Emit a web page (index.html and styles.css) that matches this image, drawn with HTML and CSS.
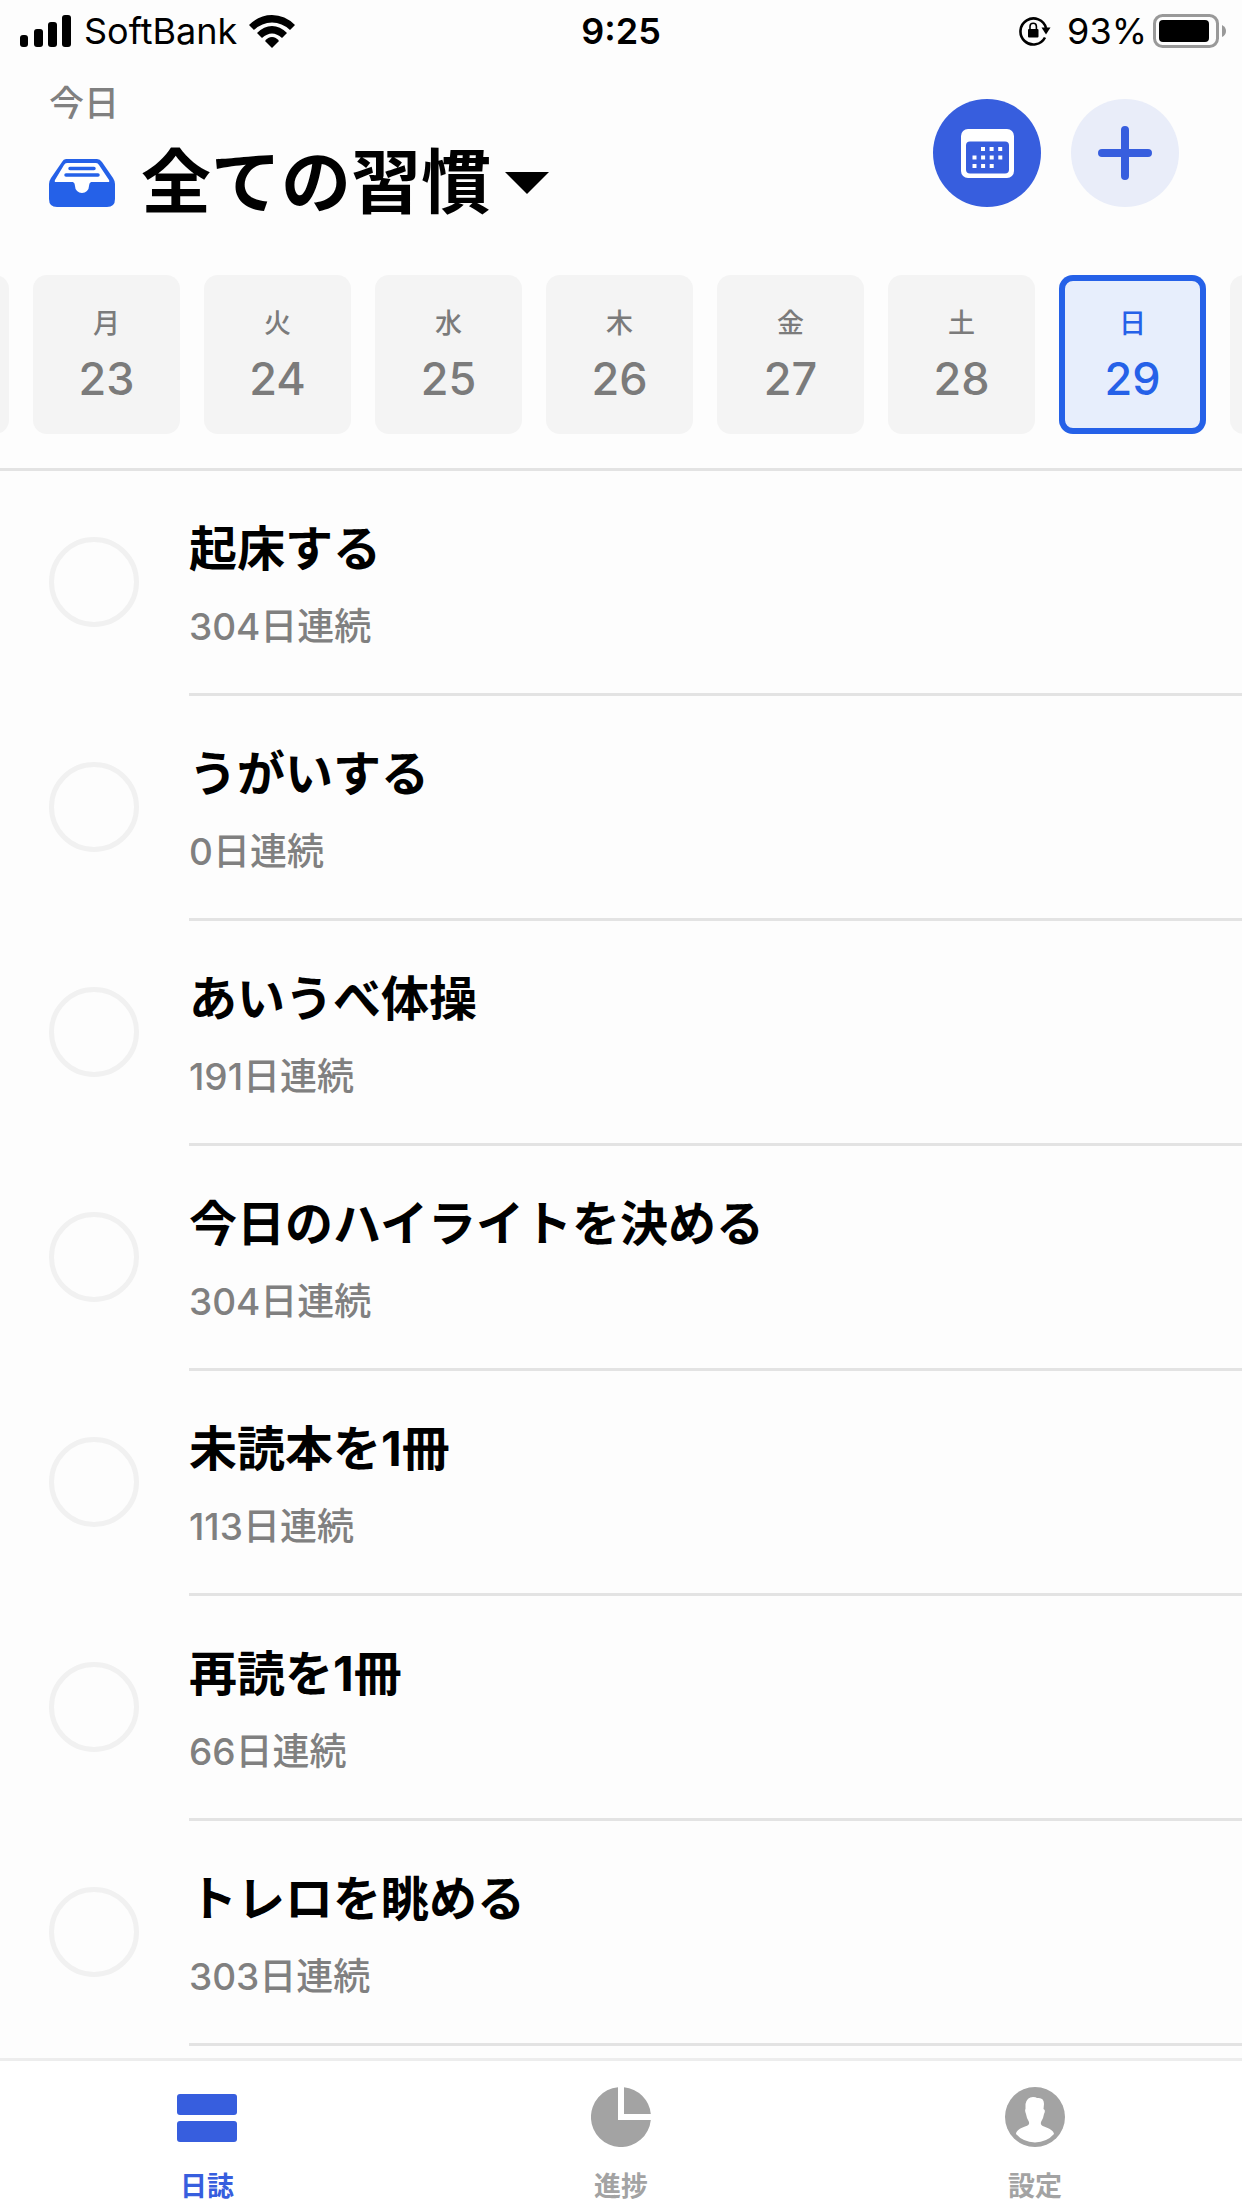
FILE: index.html
```html
<!DOCTYPE html>
<html lang="ja">
<head>
    <meta charset="UTF-8">
    <meta name="viewport" content="width=device-width, initial-scale=1.0">
    <title>全ての習慣</title>
    <link rel="stylesheet" href="styles.css">
</head>
<body>
    <div class="status-bar">
        <div class="status-left">
            <svg class="signal" width="52" height="32" viewBox="0 0 52 32">
                <rect x="0" y="20" width="8" height="12" rx="3"/>
                <rect x="14" y="14" width="9" height="18" rx="3"/>
                <rect x="28" y="7" width="9" height="25" rx="3"/>
                <rect x="42" y="0" width="9" height="32" rx="3"/>
            </svg>
            <span>SoftBank</span>
            <svg class="wifi" width="46" height="33" viewBox="0 0 46 33">
                <path d="M0 10Q10 0 23 0T46 10L41 15Q33 7.500 23 7.500T5 15Z"/>
                <path d="M8 18Q15 11 23 11T38 18L33 23Q28 18.500 23 18.500T13 23Z"/>
                <path d="M16 26Q19 22 23 22T30 26L23 33Z"/>
            </svg>
        </div>
        <span class="clock">9:25</span>
        <div class="status-right">
            <svg class="lock" width="32" height="30" viewBox="0 0 32 30">
                <path d="M26 21.500A13 13 0 1 1 27 12" fill="none" stroke="#000" stroke-width="2.600"/>
                <path d="M22.500 11.500H31.500L27 18.500Z"/>
                <rect x="9" y="13" width="10.500" height="8.500" rx="1"/>
                <path d="M11 14V10.500a3.200 3.200 0 0 1 6.400 0V14" fill="none" stroke="#000" stroke-width="1.600"/>
            </svg>
            <span>93%</span>
            <svg class="battery" width="74" height="34" viewBox="0 0 74 34">
                <rect x="1.500" y="1.500" width="63" height="31" rx="8" fill="none" stroke="#999" stroke-width="3"/>
                <rect x="6" y="6" width="50" height="22" rx="4"/>
                <path d="M69 11Q73 13 73 17T69 23Z" fill="#999"/>
            </svg>
        </div>
    </div>

    <header class="header">
        <div class="heading">
            <p class="today">今日</p>
            <div class="title">
                <svg class="inbox" width="66" height="50" viewBox="0 0 66 50">
                    <path d="M17 1H48Q51 1 53 4L64 20Q66 23 66 26V41Q66 49 58 49H8Q0 49 0 41V26Q0 23 2 20L13 4Q14.500 1 17 1Z" fill="#2561e8"/>
                    <path d="M18 5H47Q49 5 50 7L60 22Q61 24 59 24H42Q40 25 40 28A7 7 0 0 1 26 28Q26 25 24 24H7Q5 24 6 22L15 7Q16 5 18 5Z" fill="#fff"/>
                    <path d="M21 10.500H45M17 17H49" fill="none" stroke="#2561e8" stroke-width="3.500" stroke-linecap="round"/>
                </svg>
                <select class="habit-filter" aria-label="習慣">
                    <option>全ての習慣</option>
                </select>
                <svg class="caret" width="44" height="22" viewBox="0 0 44 22"><path d="M0 0H44L22 22Z"/></svg>
            </div>
        </div>
        <div class="actions">
            <button class="round-btn calendar-btn" type="button" aria-label="カレンダー">
                <svg width="53" height="49" viewBox="0 0 53 49">
                    <rect width="53" height="49" rx="7" fill="#fff"/>
                    <rect x="5" y="12.500" width="43" height="32" rx="4" fill="#375ede"/>
                    <path d="M20 20H42M11.500 28.500H42M11.500 37H33" fill="none" stroke="#fff" stroke-width="4" stroke-dasharray="4 4.600"/>
                </svg>
            </button>
            <button class="round-btn add-btn" type="button" aria-label="追加">
                <svg width="54" height="54" viewBox="0 0 54 54">
                    <path d="M27 4V50M4 27H50" stroke="#375ede" stroke-width="8" stroke-linecap="round"/>
                </svg>
            </button>
        </div>
    </header>

    <nav class="days" aria-label="日付">
        <button class="day" type="button" aria-label="前の日"></button>
        <button class="day" type="button"><span class="weekday">月</span><span class="date">23</span></button>
        <button class="day" type="button"><span class="weekday">火</span><span class="date">24</span></button>
        <button class="day" type="button"><span class="weekday">水</span><span class="date">25</span></button>
        <button class="day" type="button"><span class="weekday">木</span><span class="date">26</span></button>
        <button class="day" type="button"><span class="weekday">金</span><span class="date">27</span></button>
        <button class="day" type="button"><span class="weekday">土</span><span class="date">28</span></button>
        <button class="day selected" type="button"><span class="weekday">日</span><span class="date">29</span></button>
        <button class="day" type="button" aria-label="次の日"></button>
    </nav>

    <ul class="habits">
        <li class="habit">
            <input type="checkbox" id="habit-1">
            <label for="habit-1"><span class="name">起床する</span><span class="streak">304日連続</span></label>
        </li>
        <li class="habit">
            <input type="checkbox" id="habit-2">
            <label for="habit-2"><span class="name">うがいする</span><span class="streak">0日連続</span></label>
        </li>
        <li class="habit">
            <input type="checkbox" id="habit-3">
            <label for="habit-3"><span class="name">あいうべ体操</span><span class="streak">191日連続</span></label>
        </li>
        <li class="habit">
            <input type="checkbox" id="habit-4">
            <label for="habit-4"><span class="name">今日のハイライトを決める</span><span class="streak">304日連続</span></label>
        </li>
        <li class="habit">
            <input type="checkbox" id="habit-5">
            <label for="habit-5"><span class="name">未読本を1冊</span><span class="streak">113日連続</span></label>
        </li>
        <li class="habit">
            <input type="checkbox" id="habit-6">
            <label for="habit-6"><span class="name">再読を1冊</span><span class="streak">66日連続</span></label>
        </li>
        <li class="habit">
            <input type="checkbox" id="habit-7">
            <label for="habit-7"><span class="name">トレロを眺める</span><span class="streak">303日連続</span></label>
        </li>
    </ul>

    <nav class="tab-bar">
        <a class="tab active" href="#journal">
            <svg width="60" height="60" viewBox="0 0 60 60">
                <rect y="7" width="60" height="21" rx="3"/>
                <rect y="34" width="60" height="21" rx="3"/>
            </svg>
            <span>日誌</span>
        </a>
        <a class="tab" href="#progress">
            <svg width="60" height="60" viewBox="0 0 60 60">
                <path d="M27 0.200V33H59.800A30 30 0 1 1 27 0.200Z"/>
                <path d="M33 0.200A30 30 0 0 1 59.800 27H33Z"/>
            </svg>
            <span>進捗</span>
        </a>
        <a class="tab" href="#settings">
            <svg width="60" height="60" viewBox="0 0 60 60">
                <circle cx="30" cy="30" r="30"/>
                <path d="M28 10Q31 10 32 11Q39 10 39 17L38.500 22Q41 23 39 27Q38.500 31 36 35Q35 38 39 39.500C44 41 49 44 49 47Q42 55 30 55.500Q18 55 11 47C11 44 15 41 20 39.500Q25 38 24 35Q21.500 31 21 27Q19.500 23 20.500 22V17Q22 10 28 10Z" fill="#fff"/>
            </svg>
            <span>設定</span>
        </a>
    </nav>
</body>
</html>
```
FILE: styles.css
```css
* {
    box-sizing: border-box;
}
body {
    display: flex;
    flex-direction: column;
    height: 100vh;
    margin: 0;
    background-color: #fdfdfd;
    color: #000;
    font-family: Inter, "Noto Sans CJK JP", sans-serif;
}
button, select {
    padding: 0;
    border: none;
    background: none;
    color: inherit;
    font-family: inherit;
    cursor: pointer;
}
svg {
    display: block;
    flex-shrink: 0;
}

/* Status bar */
.status-bar {
    display: grid;
    grid-template-columns: 1fr auto 1fr;
    align-items: center;
    padding: 8px 15px 6px;
    font-size: 36px;
    line-height: 46px;
}
.status-left, .status-right {
    display: flex;
    align-items: center;
}
.status-left {
    gap: 12px;
    padding-left: 5px;
}
.status-right {
    justify-content: flex-end;
    gap: 6px;
}
.lock {
    margin-right: 10px;
}
.clock {
    font-weight: 600;
}

/* Header */
.header {
    display: flex;
    justify-content: space-between;
    padding: 20px 63px 0 49px;
}
.today {
    margin: 0;
    color: #808080;
    font-size: 35px;
    font-weight: 500;
    line-height: 46px;
}
.title {
    display: flex;
    align-items: center;
    margin-top: 2px;
}
.habit-filter {
    margin: 0 14px 0 26px;
    appearance: none;
    font-size: 70px;
    font-weight: 700;
    line-height: 110px;
}
.actions {
    display: flex;
    gap: 30px;
    padding-top: 19px;
}
.round-btn {
    display: flex;
    align-items: center;
    justify-content: center;
    width: 108px;
    height: 108px;
    border-radius: 50%;
}
.calendar-btn {
    background-color: #375ede;
}
.add-btn {
    background-color: #e9edf9;
}

/* Day strip */
.days {
    display: flex;
    gap: 24px;
    padding: 37px 0 34px;
    border-bottom: 3px solid #e3e3e3;
    overflow: hidden;
}
.day {
    display: flex;
    flex-direction: column;
    flex: 0 0 147px;
    align-items: center;
    gap: 3px;
    padding: 29px 0 23px;
    border-radius: 14px;
    background-color: #f4f4f4;
    color: #7b7b7b;
    font-weight: 500;
}
.day:first-child {
    margin-left: -138px;
}
.weekday {
    font-size: 27px;
    line-height: 40px;
}
.date {
    font-size: 45px;
    line-height: 64px;
}
.day.selected {
    background-color: #e7eefc;
    box-shadow: inset 0 0 0 6px #2561e8;
    color: #2561e8;
}

/* Habit list */
.habits {
    flex: 1;
    min-height: 0;
    margin: 0;
    padding: 0;
    overflow: hidden;
    list-style: none;
}
.habit {
    display: flex;
    align-items: center;
    gap: 50px;
    padding-left: 49px;
}
.habit input {
    width: 90px;
    height: 90px;
    margin: 0 0 3px;
    appearance: none;
    border: 5px solid #f1f1f1;
    border-radius: 50%;
}
.habit input:checked {
    border-color: #2561e8;
    background-color: #2561e8;
}
.habit label {
    display: flex;
    flex: 1;
    flex-direction: column;
    gap: 15px;
    padding: 45px 0 36px;
    border-bottom: 3px solid #e3e3e3;
}
.name {
    font-size: 48px;
    font-weight: 700;
    line-height: 66px;
}
.streak {
    color: #808080;
    font-size: 37px;
    font-weight: 500;
    line-height: 60px;
}

/* Tab bar */
.tab-bar {
    display: flex;
    border-top: 3px solid #ededed;
    background-color: #fff;
}
.tab {
    display: flex;
    flex: 1;
    flex-direction: column;
    align-items: center;
    gap: 20px;
    padding: 26px 0 2px;
    color: #a3a3a3;
    fill: currentColor;
    font-size: 27px;
    font-weight: 700;
    line-height: 39px;
    text-decoration: none;
}
.tab.active {
    color: #375ede;
}
```
